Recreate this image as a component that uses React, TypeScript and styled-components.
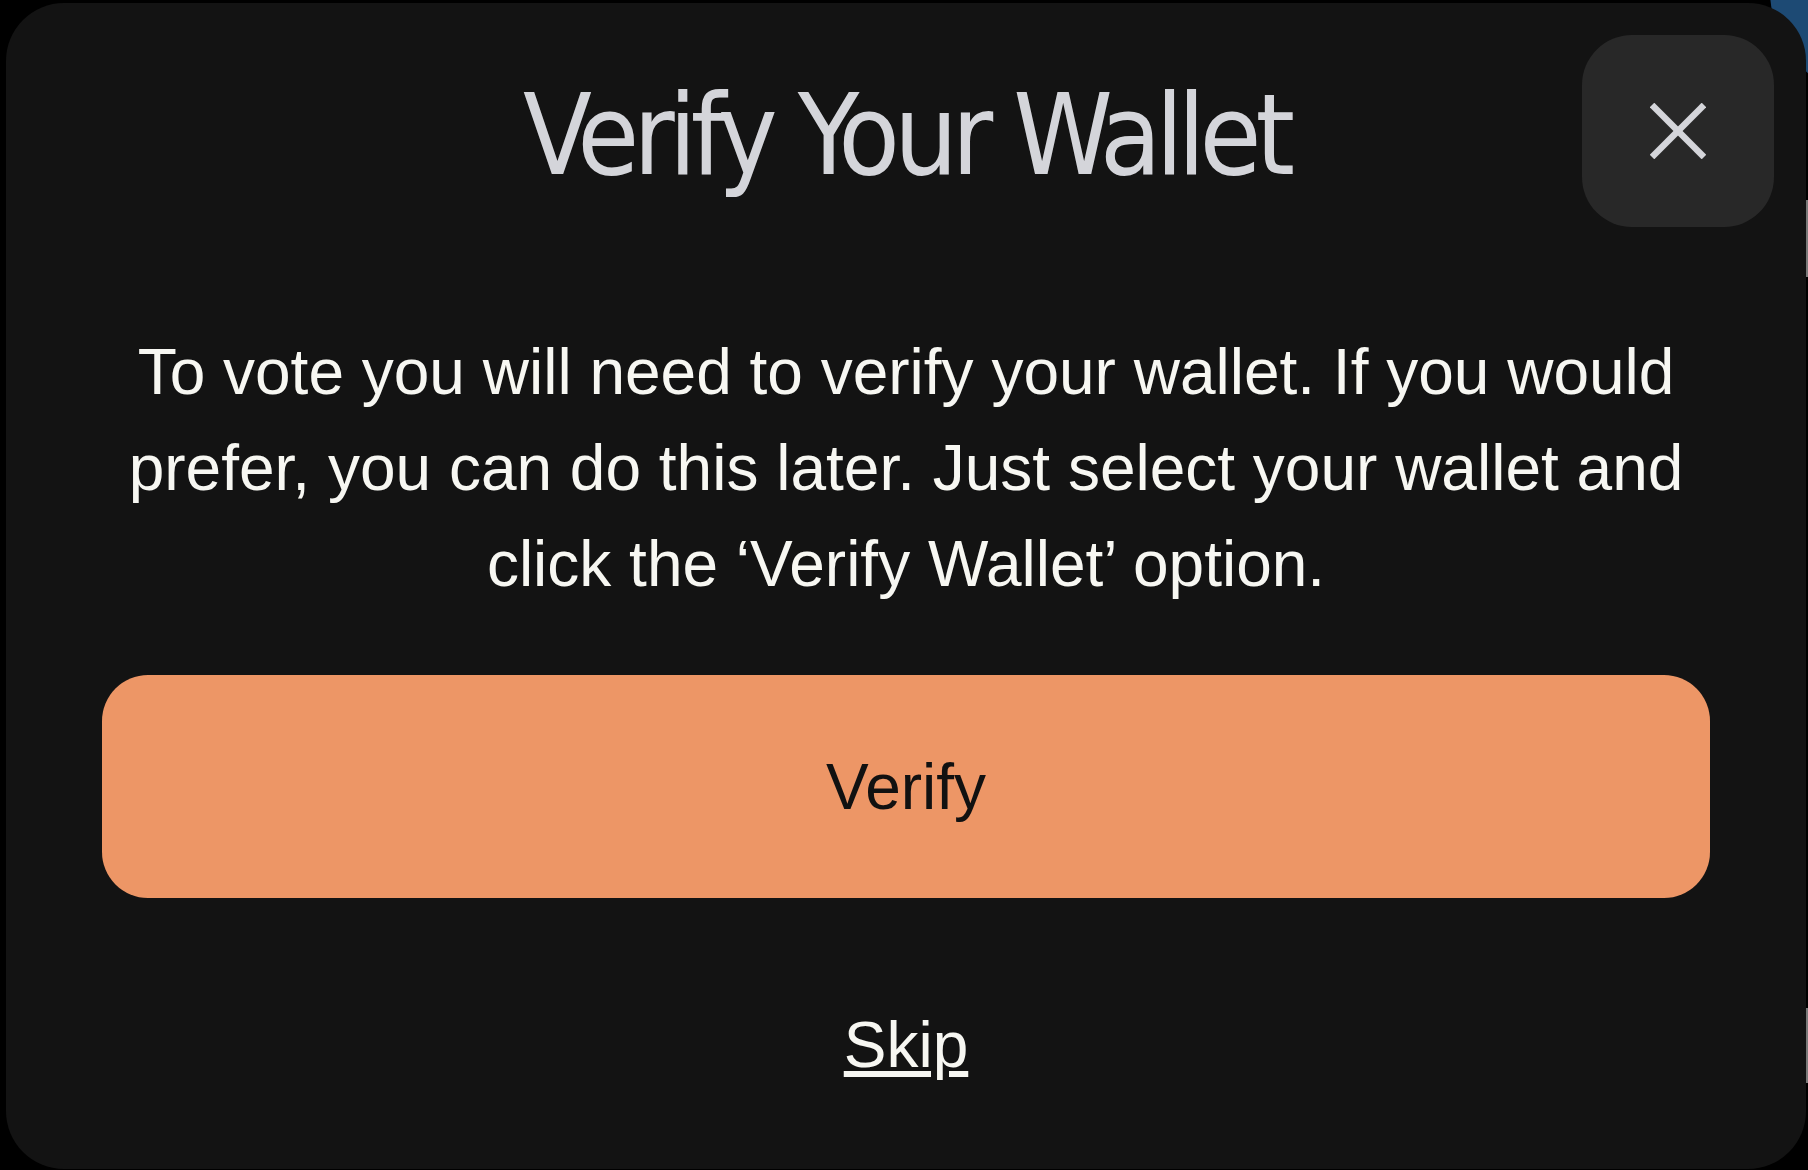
import React from "react";
import styled, { createGlobalStyle } from "styled-components";

const GlobalStyle = createGlobalStyle`
  html, body {
    margin: 0;
    padding: 0;
    background: #000000;
  }
  body {
    width: 1808px;
    height: 1170px;
    overflow: hidden;
    font-family: "Liberation Sans", Arial, sans-serif;
  }
  #root {
    position: relative;
    width: 1808px;
    height: 1170px;
  }
`;

const Backdrop = styled.div`
  position: relative;
  width: 1808px;
  height: 1170px;
  background: #000000;
  padding: 3px 2px 0 6px;
  box-sizing: border-box;
  overflow: hidden;
`;

const BgBlob = styled.div`
  position: absolute;
  top: -120px;
  right: -182px;
  width: 220px;
  height: 220px;
  border-radius: 50%;
  background: #1d4a74;
`;

const EdgeSliver = styled.div<{ $top: number; $height: number }>`
  position: absolute;
  right: 0;
  top: ${(p) => p.$top}px;
  width: 3px;
  height: ${(p) => p.$height}px;
  background: #7a7a7a;
`;

const Modal = styled.section`
  position: relative;
  z-index: 1;
  width: 1800px;
  height: 1166px;
  box-sizing: border-box;
  background: #131313;
  border-radius: 58px;
  padding: 76px 96px 76px 96px;
  display: flex;
  flex-direction: column;
  align-items: center;
`;

const CloseButton = styled.button`
  position: absolute;
  top: 32px;
  right: 32px;
  width: 192px;
  height: 192px;
  border: none;
  border-radius: 50px;
  background: #282828;
  display: flex;
  align-items: center;
  justify-content: center;
  padding: 0;
  cursor: pointer;
`;

const Title = styled.h1`
  margin: 0 0 133px 0;
  font-family: "Liberation Sans Narrow", "DejaVu Sans Condensed", "Liberation Sans", sans-serif;
  font-weight: 400;
  font-size: 112px;
  line-height: 112px;
  letter-spacing: -6px;
  color: #d4d5da;
  text-align: center;
`;

const Message = styled.p`
  margin: 0 0 63px 0;
  width: 100%;
  font-size: 64px;
  line-height: 96px;
  color: #f7f7f2;
  text-align: center;
`;

const PrimaryButton = styled.button`
  width: 100%;
  height: 223px;
  flex-shrink: 0;
  border: none;
  border-radius: 46px;
  background: #ed9666;
  color: #111111;
  font-family: "Liberation Sans", Arial, sans-serif;
  font-size: 64px;
  line-height: 96px;
  cursor: pointer;
`;

const SkipLink = styled.a`
  margin-top: 99px;
  font-size: 64px;
  line-height: 96px;
  color: #f7f7f2;
  text-decoration: underline;
  cursor: pointer;
`;

const CloseIcon = () => (
  <svg width="56" height="56" viewBox="0 0 56 56" aria-hidden="true">
    <line x1="2" y1="2" x2="54" y2="54" stroke="#d4d5da" strokeWidth="6.5" />
    <line x1="54" y1="2" x2="2" y2="54" stroke="#d4d5da" strokeWidth="6.5" />
  </svg>
);

export default function App() {
  return (
    <>
      <GlobalStyle />
      <Backdrop>
        <BgBlob />
        <EdgeSliver $top={200} $height={77} />
        <EdgeSliver $top={1008} $height={75} />
        <Modal>
          <CloseButton aria-label="Close">
            <CloseIcon />
          </CloseButton>
          <Title>Verify Your Wallet</Title>
          <Message>
            To vote you will need to verify your wallet. If you would prefer, you can do this
            later. Just select your wallet and click the ‘Verify Wallet’ option.
          </Message>
          <PrimaryButton>Verify</PrimaryButton>
          <SkipLink>Skip</SkipLink>
        </Modal>
      </Backdrop>
    </>
  );
}
